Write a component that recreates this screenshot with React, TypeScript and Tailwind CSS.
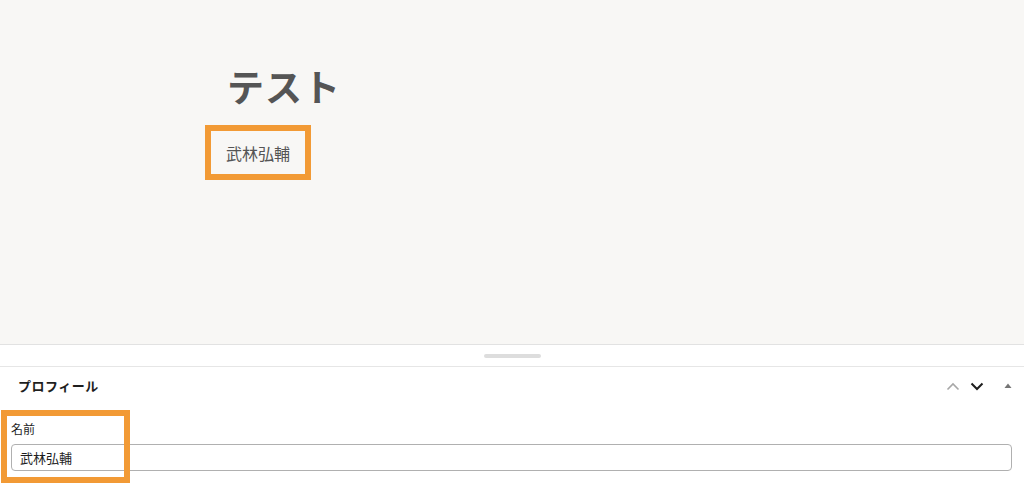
import React from "react";

const font = { fontFamily: '"Noto Sans CJK JP", "Noto Sans", sans-serif' };

export default function App() {
  return (
    <div
      className="relative w-[1024px] h-[504px] overflow-hidden bg-white flex flex-col"
      style={font}
    >
      {/* canvas */}
      <div className="h-[345px] shrink-0 bg-[#f8f7f5] border-b border-[#e2e2e2] flex flex-col">
        <h1 className="ml-[227px] mt-[62px] text-[37px] leading-[48px] font-bold text-[#555555] tracking-[1px]">
          テスト
        </h1>
        <div className="ml-[205px] mt-[15px] w-[106px] h-[55px] border-[6px] border-[#f29a35] flex items-center pl-[15px]">
          <span className="text-[16px] leading-[22px] text-[#555555]">武林弘輔</span>
        </div>
      </div>

      {/* resize strip */}
      <div className="h-[22px] shrink-0 bg-white border-b border-[#e6e6e6] flex items-center justify-center">
        <div className="w-[57px] h-[4px] bg-[#dddddd] rounded-[2px]" />
      </div>

      {/* meta box header */}
      <div className="h-[38px] shrink-0 flex items-center pl-[18px] pr-[12px]">
        <span className="text-[13px] font-bold text-[#1e1e1e] tracking-[0.5px]">プロフィール</span>
        <div className="ml-auto flex items-center">
          <svg width="14" height="9" viewBox="0 0 14 9" className="mr-[10px]">
            <path d="M1.5 7.5 L7 2 L12.5 7.5" fill="none" stroke="#a7a7a7" strokeWidth="1.6" />
          </svg>
          <svg width="14" height="9" viewBox="0 0 14 9" className="mr-[20px]">
            <path d="M1.5 1.5 L7 7 L12.5 1.5" fill="none" stroke="#1e1e1e" strokeWidth="2" />
          </svg>
          <svg width="8" height="6" viewBox="0 0 8 6">
            <path d="M4 0.5 L7.5 5 L0.5 5 Z" fill="#757575" />
          </svg>
        </div>
      </div>

      {/* field */}
      <div className="pl-[11px] pr-[12px] pt-[16px]">
        <div className="text-[12px] leading-[16px] text-[#1e1e1e]">名前</div>
        <div className="mt-[7px] h-[27px] border border-[#b0b0b0] rounded-[4px] flex items-center pl-[8px]">
          <span className="text-[13px] text-[#1e1e1e]">武林弘輔</span>
        </div>
      </div>

      {/* annotation overlay */}
      <div className="absolute left-[1px] top-[410px] w-[129px] h-[73px] border-[6px] border-[#f29a35]" />
    </div>
  );
}
